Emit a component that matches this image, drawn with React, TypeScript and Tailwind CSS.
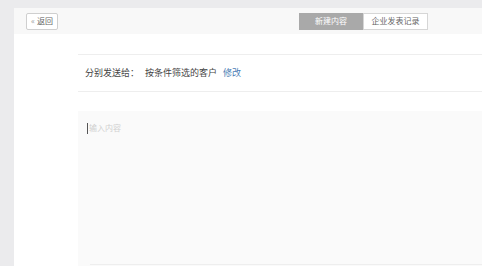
export default function App() {
  return (
    <div
      className="w-[482px] h-[266px] overflow-hidden bg-[#ebebed] pt-[8px] pl-[14px]"
      style={{ fontFamily: '"Noto Sans CJK SC", "Noto Sans", sans-serif' }}
    >
      <div className="h-full bg-white flex flex-col">
        {/* header */}
        <div className="h-[26px] shrink-0 bg-[#f8f8f8] flex items-center justify-between pl-[12px] pr-[54px]">
          <button className="h-[17px] w-[32px] border border-[#cfcfcf] rounded-[2px] bg-white flex items-center justify-center gap-[2px] text-[8px] leading-none text-[#666]">
            <span className="text-[#999]">«</span>
            <span>返回</span>
          </button>
          <div className="flex h-[17px] text-[8px] leading-none">
            <div className="w-[64px] bg-[#a9a9a9] text-white flex items-center justify-center">新建内容</div>
            <div className="w-[65px] bg-white border border-[#d6d6d6] text-[#666] flex items-center justify-center">企业发表记录</div>
          </div>
        </div>

        {/* body */}
        <div className="flex-1 flex flex-col pl-[64px] pt-[20px]">
          <div className="h-[38px] border-y border-[#eeeeee] flex items-center pl-[7px] text-[9px] text-[#444]">
            <span>分别发送给：</span>
            <span className="ml-[6px]">按条件筛选的客户</span>
            <span className="ml-[6px] text-[#4b7db5]">修改</span>
          </div>
          <div className="mt-[19px] flex-1 bg-[#fafafa] flex flex-col">
            <div className="flex items-center pl-[9px] pt-[11px] text-[8px] text-[#d0d0d0]">
              <span className="w-px h-[11px] bg-[#555] mr-px"></span>
              <span>输入内容</span>
            </div>
            <div className="mt-auto ml-[12px] mb-[1px] border-t border-[#eeeeee]"></div>
          </div>
        </div>
      </div>
    </div>
  );
}
